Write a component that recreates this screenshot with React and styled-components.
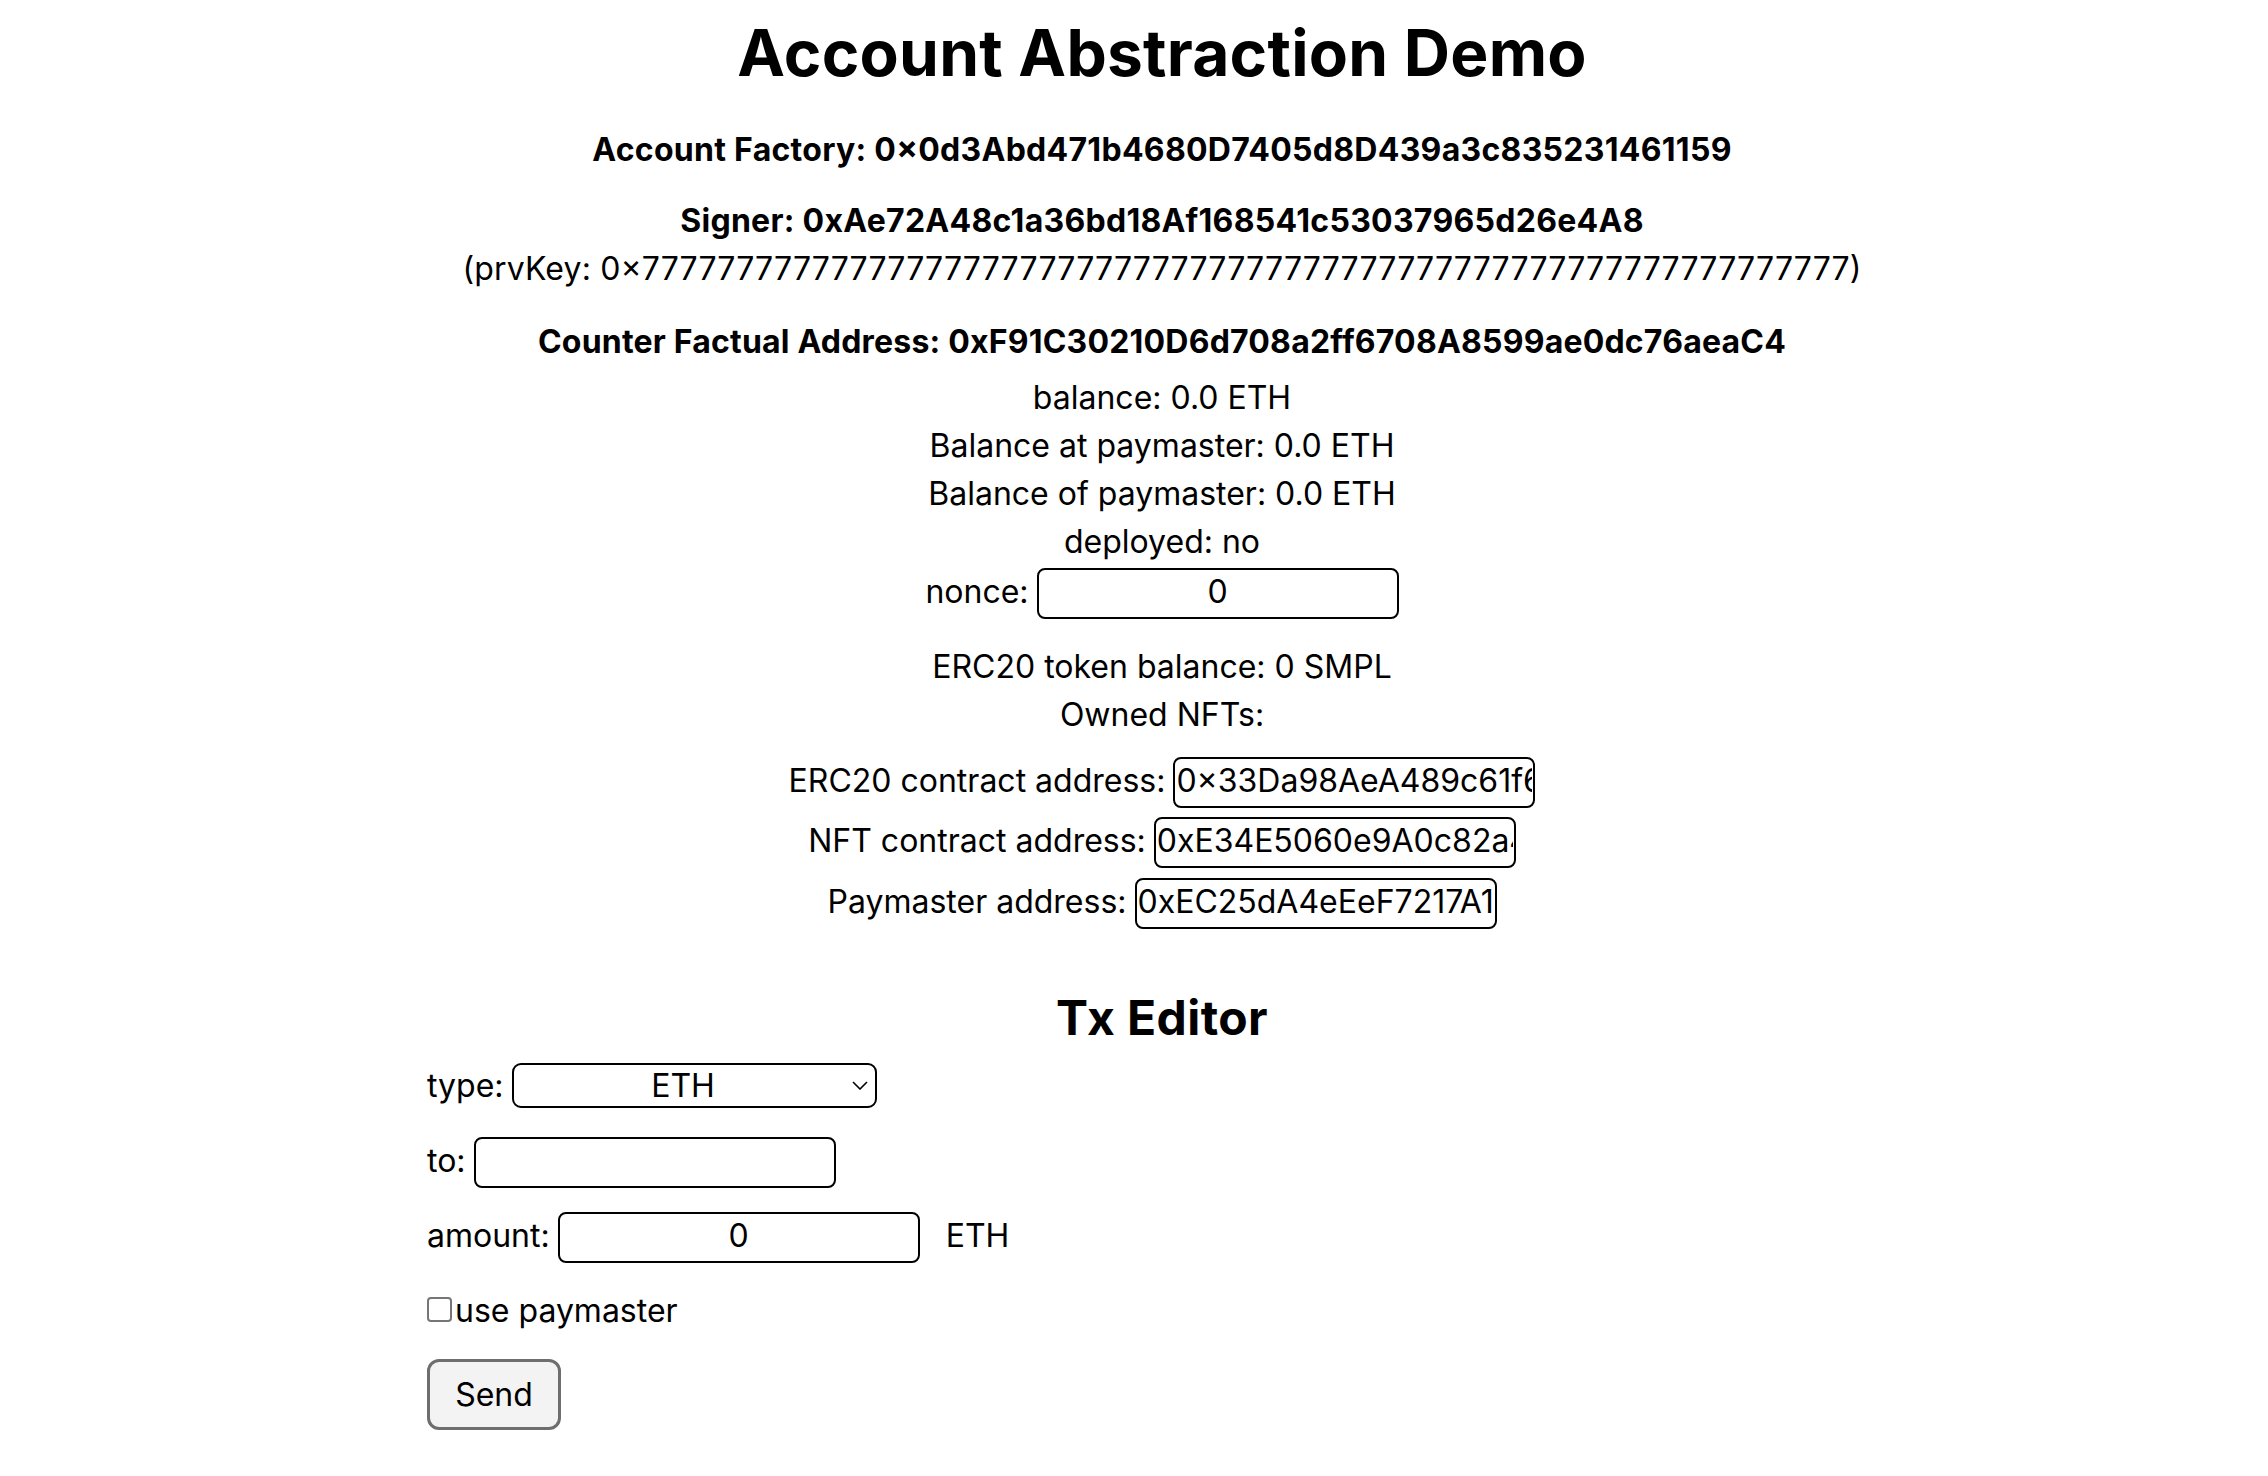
import React from 'react';
import styled, { createGlobalStyle } from 'styled-components';

const GlobalStyle = createGlobalStyle`
  html, body {
    margin: 0;
    padding: 0;
    background: #ffffff;
  }
  body {
    font-family: Inter, "Noto Sans", sans-serif;
    font-size: 32px;
    line-height: 48px;
    color: #000000;
    font-feature-settings: "calt" 1;
  }
`;

const Page = styled.main`
  box-sizing: border-box;
  width: 1470px;
  margin-left: 427px;
  padding-top: 14px;
  padding-bottom: 40px;
  text-align: center;
`;

const Title = styled.h1`
  margin: 0;
  font-size: 64px;
  line-height: 77px;
  font-weight: 700;
  letter-spacing: 0.25px;
`;

const InfoHeading = styled.div`
  margin-top: ${(p) => p.$mt || 0}px;
  font-weight: 700;
  line-height: 48px;
  letter-spacing: ${(p) => (p.$tight ? '0.2px' : '0.28px')};
`;

const InfoBlock = styled.div`
  margin-top: ${(p) => p.$mt || 0}px;
`;

const InfoLine = styled.div`
  line-height: 48px;
  font-weight: 400;
  letter-spacing: ${(p) => (p.$wide ? '0.15px' : 'normal')};
`;

const CenterRow = styled.div`
  display: flex;
  justify-content: center;
  align-items: baseline;
  margin-top: ${(p) => p.$mt || 0}px;
`;

const FieldLabel = styled.span`
  line-height: 48px;
  white-space: pre;
  margin-right: ${(p) => (p.$gap != null ? p.$gap : 8)}px;
`;

const TextInput = styled.input`
  box-sizing: border-box;
  width: 362px;
  height: 51px;
  margin: 0;
  padding: 0 1px 4px;
  border: 2px solid #000;
  border-radius: 8px;
  background: #fff;
  font-family: Inter, "Noto Sans", sans-serif;
  font-size: 32px;
  color: #000;
  text-align: ${(p) => (p.$center ? 'center' : 'left')};
  outline: none;
`;

const SectionTitle = styled.h2`
  margin: ${(p) => p.$mt || 0}px 0 0;
  font-size: 48px;
  line-height: 58px;
  font-weight: 700;
  letter-spacing: 0.4px;
`;

const TxForm = styled.div`
  text-align: left;
  margin-top: 15px;
`;

const TxRow = styled.div`
  display: flex;
  align-items: baseline;
  margin-top: ${(p) => (p.$mt != null ? p.$mt : 24)}px;
`;

const SelectWrap = styled.span`
  position: relative;
  display: inline-flex;
`;

const TypeSelect = styled.select`
  box-sizing: border-box;
  width: 365px;
  height: 45px;
  margin: 0;
  padding: 0 26px 0 4px;
  border: 2px solid #000;
  border-radius: 9px;
  background: #fff;
  appearance: none;
  -webkit-appearance: none;
  font-family: Inter, "Noto Sans", sans-serif;
  font-size: 32px;
  color: #000;
  text-align: center;
  text-align-last: center;
  outline: none;
`;

const Chevron = styled.svg`
  position: absolute;
  right: 9px;
  top: 18px;
  width: 16px;
  height: 9px;
  pointer-events: none;
`;

const Unit = styled.span`
  line-height: 48px;
  margin-left: 26px;
`;

const CheckLabel = styled.label`
  display: flex;
  align-items: baseline;
  line-height: 48px;
`;

const CheckBox = styled.input`
  appearance: none;
  -webkit-appearance: none;
  box-sizing: border-box;
  width: 25px;
  height: 25px;
  margin: 0 3px 1px 0;
  border: 2px solid #767676;
  border-radius: 4px;
  background: #fff;
`;

const SendButton = styled.button`
  box-sizing: border-box;
  width: 134px;
  height: 71px;
  margin-top: 24px;
  padding: 0;
  border: 3px solid #6e6e6e;
  border-radius: 12px;
  background: #f3f3f3;
  font-family: Inter, "Noto Sans", sans-serif;
  font-size: 32px;
  color: #000;
`;

const prvKey = '0\u00d7' + '7'.repeat(64);

export default function App() {
  return (
    <>
      <GlobalStyle />
      <Page>
        <Title>Account Abstraction Demo</Title>
        <InfoHeading $mt={34.5}>
          Account Factory: 0{'\u00d7'}0d3Abd471b4680D7405d8D439a3c835231461159
        </InfoHeading>
        <InfoBlock $mt={23.5}>
          <InfoHeading>Signer: 0xAe72A48c1a36bd18Af168541c53037965d26e4A8</InfoHeading>
          <InfoLine $wide>(prvKey: {prvKey})</InfoLine>
        </InfoBlock>
        <InfoHeading $mt={25} $tight>
          Counter Factual Address: 0xF91C30210D6d708a2ff6708A8599ae0dc76aeaC4
        </InfoHeading>
        <InfoBlock $mt={8}>
          <InfoLine>balance: 0.0 ETH</InfoLine>
          <InfoLine>Balance at paymaster: 0.0 ETH</InfoLine>
          <InfoLine>Balance of paymaster: 0.0 ETH</InfoLine>
          <InfoLine>deployed: no</InfoLine>
        </InfoBlock>
        <CenterRow $mt={1.5}>
          <FieldLabel>nonce:</FieldLabel>
          <TextInput $center defaultValue="0" />
        </CenterRow>
        <InfoBlock $mt={24.5}>
          <InfoLine>ERC20 token balance: 0 SMPL</InfoLine>
          <InfoLine>Owned NFTs:</InfoLine>
        </InfoBlock>
        <CenterRow $mt={17.5}>
          <FieldLabel>ERC20 contract address:</FieldLabel>
          <TextInput defaultValue={'0\u00d733Da98AeA489c61f60B2e7C4a9D1f3E5b8A6c0d2'} />
        </CenterRow>
        <CenterRow $mt={9.5}>
          <FieldLabel>NFT contract address:</FieldLabel>
          <TextInput defaultValue="0xE34E5060e9A0c82a47B1c9D3e5F2a8C6b4d0E1f3" />
        </CenterRow>
        <CenterRow $mt={9.5}>
          <FieldLabel>Paymaster address:</FieldLabel>
          <TextInput defaultValue="0xEC25dA4eEeF7217A19c3B5d7E2f4A6b8C0d1e3F5" />
        </CenterRow>

        <SectionTitle $mt={60.5}>Tx Editor</SectionTitle>
        <TxForm>
          <TxRow $mt={0}>
            <FieldLabel>type:</FieldLabel>
            <SelectWrap>
              <TypeSelect defaultValue="ETH">
                <option value="ETH">ETH</option>
                <option value="ERC20">ERC20</option>
                <option value="NFT">NFT</option>
              </TypeSelect>
              <Chevron viewBox="0 0 16 9" fill="none">
                <path d="M1 1 L8 8 L15 1" stroke="#000" strokeWidth="1.6" />
              </Chevron>
            </SelectWrap>
          </TxRow>
          <TxRow $mt={27}>
            <FieldLabel>to:</FieldLabel>
            <TextInput defaultValue="" />
          </TxRow>
          <TxRow>
            <FieldLabel>amount:</FieldLabel>
            <TextInput $center defaultValue="0" />
            <Unit>ETH</Unit>
          </TxRow>
          <TxRow>
            <CheckLabel>
              <CheckBox type="checkbox" />
              use paymaster
            </CheckLabel>
          </TxRow>
          <SendButton type="button">Send</SendButton>
        </TxForm>
      </Page>
    </>
  );
}
